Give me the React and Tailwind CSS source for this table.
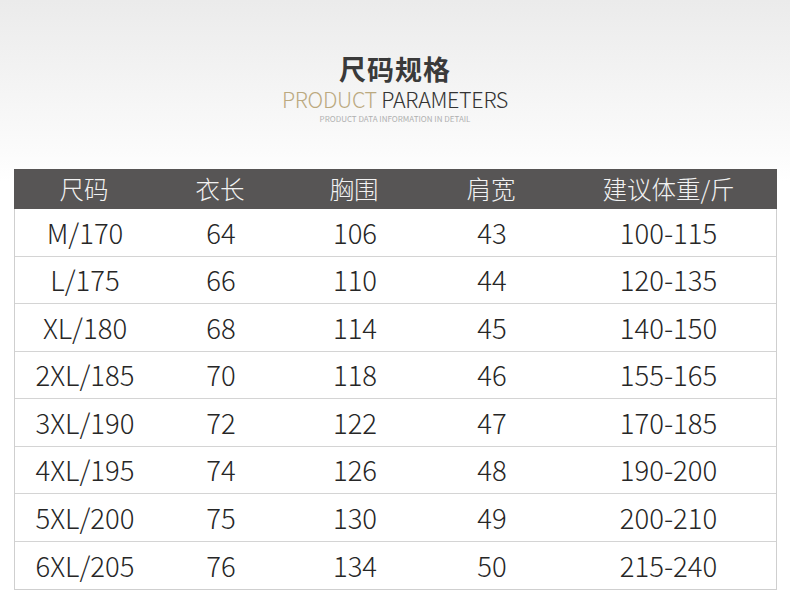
const cols = ["尺码", "衣长", "胸围", "肩宽", "建议体重/斤"];
const widths = ["w-[140px]", "w-[132px]", "w-[136px]", "w-[138px]", "flex-1"];

const rows = [
  ["M/170", "64", "106", "43", "100-115"],
  ["L/175", "66", "110", "44", "120-135"],
  ["XL/180", "68", "114", "45", "140-150"],
  ["2XL/185", "70", "118", "46", "155-165"],
  ["3XL/190", "72", "122", "47", "170-185"],
  ["4XL/195", "74", "126", "48", "190-200"],
  ["5XL/200", "75", "130", "49", "200-210"],
  ["6XL/205", "76", "134", "50", "215-240"],
];

export default function App() {
  return (
    <div
      className="w-[790px] h-[605px] bg-gradient-to-b from-[#ebebeb] via-[#fbfbfb] via-[25%] to-white to-[30%]"
      style={{ fontFamily: '"Noto Sans CJK SC", "Noto Sans", sans-serif' }}
    >
      <div className="flex flex-col items-center pt-[52px]">
        <h1 className="text-[27px] leading-[34px] font-bold text-[#3a3a3a] tracking-[1px]">尺码规格</h1>
        <div className="text-[21.5px] leading-[24px] font-light tracking-[-0.3px] mt-[1px]">
          <span className="text-[#bba97f]">PRODUCT </span>
          <span className="text-[#333]">PARAMETERS</span>
        </div>
        <div className="text-[8px] leading-[10px] text-[#b0b0b0] mt-[3px]">PRODUCT DATA INFORMATION IN DETAIL</div>
      </div>

      <div className="mx-[14px] mt-[45px] w-[763px] border-x border-b border-[#cfcfcf]">
        <div className="flex h-[40px] items-center bg-[#575555] -mx-px">
          {cols.map((c, i) => (
            <div key={c} className={`${widths[i]} text-center text-[24.5px] font-light text-[#f2f2f2]`}>
              {c}
            </div>
          ))}
        </div>
        {rows.map((r, ri) => (
          <div
            key={r[0]}
            className={`flex h-[47.5px] items-center ${ri < rows.length - 1 ? "border-b border-[#d4d4d4]" : ""}`}
          >
            {r.map((v, i) => (
              <div key={i} className={`${widths[i]} text-center text-[27.5px] font-light text-[#262626]`}>
                {v}
              </div>
            ))}
          </div>
        ))}
      </div>
    </div>
  );
}
